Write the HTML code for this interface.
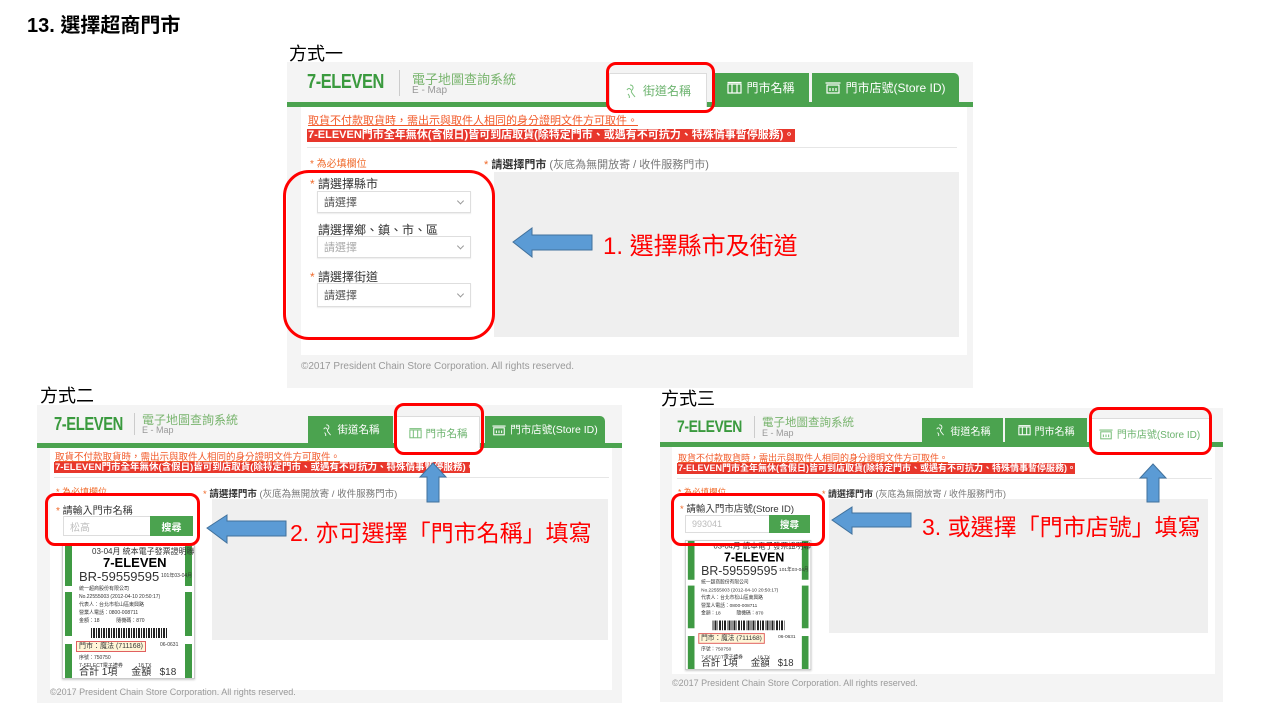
<!DOCTYPE html>
<html><head><meta charset="utf-8">
<style>
*{margin:0;padding:0;box-sizing:border-box}
body{width:1280px;height:720px;background:#fff;position:relative;overflow:hidden;font-family:"Liberation Sans","Noto Sans CJK TC",sans-serif}
.a{position:absolute;white-space:nowrap}
.panel{position:absolute;background:#f4f4f4;overflow:hidden}
.bar{position:absolute;left:0;right:0;height:5px;background:#4ba34f}
.logo{position:absolute;font-weight:bold;color:#3a9a3e;transform:scaleX(.82);transform-origin:left top;letter-spacing:-.5px;line-height:1;white-space:nowrap}
.tab{position:absolute;background:#4ba34f;color:#fff;display:flex;align-items:center;justify-content:center;gap:4px;white-space:nowrap}
.tab.on{background:#fff;color:#6cb36e;border:1px solid #dcdcdc;border-bottom:none}
.content{position:absolute;background:#fff}
.l1{position:absolute;color:#f25a2a;text-decoration:underline;white-space:nowrap}
.l2{position:absolute;background:#e8372c;color:#fff;font-weight:bold;white-space:nowrap;padding:0 1px}
.hr{position:absolute;height:1px;background:#e6e6e6}
.req{position:absolute;color:#f06a2a;white-space:nowrap}
.lab{position:absolute;color:#333;white-space:nowrap}
.lab i{color:#f06a2a;font-style:normal}
.gray{position:absolute;background:#efefef}
.sel{position:absolute;background:#fff;border:1px solid #dedede;box-shadow:0 1px 1px rgba(0,0,0,.08);color:#555;padding-left:6px;display:flex;align-items:center}
.sel::after{content:"";position:absolute;right:7px;top:50%;width:4px;height:4px;border-right:1px solid #999;border-bottom:1px solid #999;transform:translateY(-70%) rotate(45deg)}
.foot{position:absolute;color:#999;white-space:nowrap}
.rbox{position:absolute;border:3px solid #f00;border-radius:10px}
.ann{position:absolute;color:#f00;white-space:nowrap;font-family:"Liberation Sans","Noto Sans CJK TC",sans-serif}
.inp{position:absolute;background:#fff;border:1px solid #ddd;color:#bbb;display:flex;align-items:center;padding-left:6px}
.btn{position:absolute;background:#4ba34f;color:#fff;display:flex;align-items:center;justify-content:center;font-weight:bold}
.rc{position:absolute;background:#fff;border:1px solid #ccc;box-shadow:0 1px 2px rgba(0,0,0,.2);overflow:hidden;transform-origin:left top}
.rc .s{position:absolute;width:7px;background:#3f9a43}
.rc .t{position:absolute;white-space:nowrap;color:#333;line-height:1}
</style></head><body>

<div class="a" style="left:27px;top:9px;font-size:20px;font-weight:bold;color:#000">13. 選擇超商門市</div>

<!-- ===== Panel 1 ===== -->
<div class="a" style="left:289px;top:40px;font-size:18px;color:#000">方式一</div>
<div class="panel" style="left:287px;top:62px;width:686px;height:326px">
  <div class="bar" style="top:40px"></div>
  <div class="logo" style="left:20px;top:10px;font-size:20px">7-ELEVEN</div>
  <div class="a" style="left:112px;top:8px;width:1px;height:26px;background:#ccc"></div>
  <div class="a" style="left:125px;top:7px;font-size:13px;color:#7ab56f">電子地圖查詢系統</div>
  <div class="a" style="left:125px;top:23px;font-size:10px;color:#999">E - Map</div>
  <div class="tab on" style="left:322px;top:11px;width:98px;height:34px;font-size:12px"><svg width="14" height="14" viewBox="0 0 14 14" fill="none" stroke="#7cc07e" stroke-width="1"><path d="M5 1c3 0 4 3 2 5s1 4 3 7M2 6c1-2 3-2 4 0M3 10c1 1 2 3 1 4"/></svg>街道名稱</div>
  <div class="tab" style="left:426px;top:11px;width:96px;height:29px;font-size:12px"><svg width="15" height="13" viewBox="0 0 15 13" fill="none" stroke="#fff" stroke-width="1.2"><rect x="1" y="3" width="13" height="9"/><path d="M0.5 1.5h14M5 3v9M10 3v9"/></svg>門市名稱</div>
  <div class="tab" style="left:525px;top:11px;width:147px;height:29px;font-size:12px;border-top-right-radius:5px"><svg width="16" height="13" viewBox="0 0 16 13" fill="none" stroke="#fff" stroke-width="1.2"><rect x="2" y="4" width="12" height="8"/><path d="M0.5 2h15M5 7v3M8 7v3M11 7v3"/></svg>門市店號(Store ID)</div>
  <div class="content" style="left:14px;top:45px;width:666px;height:248px"></div>
  <div class="l1" style="left:21px;top:53px;font-size:11px;line-height:12px">取貨不付款取貨時，需出示與取件人相同的身分證明文件方可取件。</div>
  <div class="l2" style="left:20px;top:67px;font-size:11px;line-height:13px;width:488px">7-ELEVEN門市全年無休(含假日)皆可到店取貨(除特定門市、或遇有不可抗力、特殊情事暫停服務)。</div>
  <div class="hr" style="left:20px;top:85px;width:650px"></div>
  <div class="req" style="left:23px;top:93px;font-size:10px">* 為必填欄位</div>
  <div class="lab" style="left:197px;top:94px;font-size:11px;color:#777"><i>*</i> <b style="color:#333">請選擇門市</b> (灰底為無開放寄 / 收件服務門市)</div>
  <div class="gray" style="left:207px;top:110px;width:465px;height:165px"></div>
  <div class="lab" style="left:23px;top:113px;font-size:12px"><i>*</i> 請選擇縣市</div>
  <div class="sel" style="left:30px;top:129px;width:154px;height:22px;font-size:11px">請選擇</div>
  <div class="lab" style="left:31px;top:159px;font-size:12px">請選擇鄉、鎮、市、區</div>
  <div class="sel" style="left:30px;top:174px;width:154px;height:22px;font-size:11px;color:#aaa">請選擇</div>
  <div class="lab" style="left:23px;top:206px;font-size:12px"><i>*</i> 請選擇街道</div>
  <div class="sel" style="left:30px;top:221px;width:154px;height:24px;font-size:11px">請選擇</div>
  <div class="foot" style="left:14px;top:299px;font-size:10px">©2017 President Chain Store Corporation. All rights reserved.</div>
</div>
<div class="rbox" style="left:606px;top:62px;width:109px;height:51px"></div>
<div class="rbox" style="left:283px;top:170px;width:212px;height:170px;border-radius:26px"></div>
<svg class="a" style="left:512px;top:227px" width="81" height="31"><polygon points="1,15 20,1 20,8 80,8 80,23 20,23 20,30" fill="#5b9bd5" stroke="#41719c"/></svg>
<div class="ann" style="left:603px;top:226px;font-size:24px">1. 選擇縣市及街道</div>

<!-- ===== Panel 2 ===== -->
<div class="a" style="left:40px;top:382px;font-size:18px;color:#000">方式二</div>
<div class="panel" style="left:37px;top:405px;width:585px;height:298px">
  <div class="bar" style="top:38px"></div>
  <div class="logo" style="left:17px;top:10px;font-size:18px">7-ELEVEN</div>
  <div class="a" style="left:97px;top:8px;width:1px;height:22px;background:#ccc"></div>
  <div class="a" style="left:105px;top:6px;font-size:12px;color:#7ab56f">電子地圖查詢系統</div>
  <div class="a" style="left:105px;top:20px;font-size:9px;color:#999">E - Map</div>
  <div class="tab" style="left:271px;top:11px;width:85px;height:27px;font-size:10.5px"><svg width="12" height="12" viewBox="0 0 14 14" fill="none" stroke="#fff" stroke-width="1"><path d="M5 1c3 0 4 3 2 5s1 4 3 7M2 6c1-2 3-2 4 0M3 10c1 1 2 3 1 4"/></svg>街道名稱</div>
  <div class="tab on" style="left:359px;top:11px;width:84px;height:33px;font-size:10.5px"><svg width="13" height="12" viewBox="0 0 15 13" fill="none" stroke="#7cc07e" stroke-width="1.2"><rect x="1" y="3" width="13" height="9"/><path d="M0.5 1.5h14M5 3v9M10 3v9"/></svg>門市名稱</div>
  <div class="tab" style="left:448px;top:11px;width:120px;height:27px;font-size:10.5px;border-top-right-radius:5px"><svg width="14" height="12" viewBox="0 0 16 13" fill="none" stroke="#fff" stroke-width="1.2"><rect x="2" y="4" width="12" height="8"/><path d="M0.5 2h15M5 7v3M8 7v3M11 7v3"/></svg>門市店號(Store ID)</div>
  <div class="content" style="left:13px;top:43px;width:562px;height:242px"></div>
  <div class="l1" style="left:18px;top:48px;font-size:9.5px;line-height:10px">取貨不付款取貨時，需出示與取件人相同的身分證明文件方可取件。</div>
  <div class="l2" style="left:17px;top:57px;font-size:9.5px;line-height:11px;width:416px">7-ELEVEN門市全年無休(含假日)皆可到店取貨(除特定門市、或遇有不可抗力、特殊情事暫停服務)。</div>
  <div class="hr" style="left:17px;top:72px;width:555px"></div>
  <div class="req" style="left:19px;top:80px;font-size:9px">* 為必填欄位</div>
  <div class="lab" style="left:166px;top:81px;font-size:9.5px;color:#777"><i>*</i> <b style="color:#333">請選擇門市</b> (灰底為無開放寄 / 收件服務門市)</div>
  <div class="gray" style="left:175px;top:94px;width:396px;height:141px"></div>
  <div class="lab" style="left:19px;top:97px;font-size:10px"><i>*</i> 請輸入門市名稱</div>
  <div class="inp" style="left:26px;top:111px;width:88px;height:20px;font-size:10px">松高</div>
  <div class="btn" style="left:113px;top:111px;width:43px;height:20px;font-size:10px">搜尋</div>
  <div class="rc" style="left:25px;top:140px;width:133px;height:134px">
    <div class="s" style="left:2px;top:0;height:40px"></div><div class="s" style="left:2px;top:46px;height:44px"></div><div class="s" style="left:2px;top:98px;height:36px"></div>
    <div class="s" style="right:2px;top:0;height:40px"></div><div class="s" style="right:2px;top:46px;height:44px"></div><div class="s" style="right:2px;top:98px;height:36px"></div>
    <div class="t" style="left:29px;top:2px;font-size:8px">03-04月 統本電子發票證明聯</div>
    <div class="t" style="left:40px;top:10px;font-size:13px;font-weight:bold;color:#000">7-ELEVEN</div>
    <div class="t" style="left:16px;top:24px;font-size:13px">BR-59559595</div>
    <div class="t" style="left:98px;top:28px;font-size:5px">101年03-04月</div>
    <div class="t" style="left:16px;top:39px;font-size:5px;line-height:8px">統一超商股份有限公司<br>No.22555003 (2012-04-10 20:50:17)<br>代表人：台北市松山區東興路<br>營業人電話：0800-008711<br>金額：18 &nbsp;&nbsp;&nbsp;&nbsp;&nbsp;&nbsp;&nbsp;&nbsp;&nbsp;&nbsp; 隨機碼：870</div>
    <div class="a" style="left:28px;top:82px;width:76px;height:10px;background:repeating-linear-gradient(90deg,#222 0 1px,#fff 1px 2px,#222 2px 4px,#fff 4px 5px)"></div>
    <div class="t" style="left:13px;top:95px;font-size:7px;border:1px solid #e06060;background:#fff6d8;padding:1px 2px">門市：魔法 (711168)</div>
    <div class="t" style="left:97px;top:97px;font-size:5px">06-0631</div>
    <div class="t" style="left:16px;top:108px;font-size:5px;line-height:8px">序號：750750<br>7-SELECT電子禮券 &nbsp;&nbsp;&nbsp;&nbsp;&nbsp;&nbsp;&nbsp;&nbsp;&nbsp; 18 TX</div>
    <div class="t" style="left:16px;top:122px;font-size:10px">合計 1項 &nbsp;&nbsp;&nbsp; 金額 &nbsp; $18</div>
  </div>
  <div class="foot" style="left:13px;top:282px;font-size:9px">©2017 President Chain Store Corporation. All rights reserved.</div>
</div>
<div class="rbox" style="left:394px;top:403px;width:90px;height:52px"></div>
<div class="rbox" style="left:45px;top:493px;width:155px;height:53px"></div>
<svg class="a" style="left:206px;top:514px" width="81" height="30"><polygon points="1,14 21,1 21,7 80,7 80,22 21,22 21,29" fill="#5b9bd5" stroke="#41719c"/></svg>
<svg class="a" style="left:419px;top:462px" width="28" height="41"><polygon points="14,1 27,15 20,15 20,40 8,40 8,15 1,15" fill="#5b9bd5" stroke="#41719c"/></svg>
<div class="ann" style="left:290px;top:514px;font-size:23px">2. 亦可選擇「門市名稱」填寫</div>

<!-- ===== Panel 3 ===== -->
<div class="a" style="left:661px;top:385px;font-size:18px;color:#000">方式三</div>
<div class="panel" style="left:660px;top:408px;width:563px;height:294px">
  <div class="bar" style="top:34px"></div>
  <div class="logo" style="left:17px;top:10px;font-size:17px">7-ELEVEN</div>
  <div class="a" style="left:94px;top:8px;width:1px;height:22px;background:#ccc"></div>
  <div class="a" style="left:102px;top:6px;font-size:11.5px;color:#7ab56f">電子地圖查詢系統</div>
  <div class="a" style="left:102px;top:20px;font-size:9px;color:#999">E - Map</div>
  <div class="tab" style="left:262px;top:10px;width:81px;height:24px;font-size:10px"><svg width="12" height="12" viewBox="0 0 14 14" fill="none" stroke="#fff" stroke-width="1"><path d="M5 1c3 0 4 3 2 5s1 4 3 7M2 6c1-2 3-2 4 0M3 10c1 1 2 3 1 4"/></svg>街道名稱</div>
  <div class="tab" style="left:345px;top:10px;width:82px;height:24px;font-size:10px"><svg width="13" height="12" viewBox="0 0 15 13" fill="none" stroke="#fff" stroke-width="1.2"><rect x="1" y="3" width="13" height="9"/><path d="M0.5 1.5h14M5 3v9M10 3v9"/></svg>門市名稱</div>
  <div class="tab on" style="left:429px;top:10px;width:121px;height:30px;font-size:10px"><svg width="14" height="12" viewBox="0 0 16 13" fill="none" stroke="#7cc07e" stroke-width="1.2"><rect x="2" y="4" width="12" height="8"/><path d="M0.5 2h15M5 7v3M8 7v3M11 7v3"/></svg>門市店號(Store ID)</div>
  <div class="content" style="left:12px;top:39px;width:543px;height:227px"></div>
  <div class="l1" style="left:18px;top:45px;font-size:9px;line-height:10px">取貨不付款取貨時，需出示與取件人相同的身分證明文件方可取件。</div>
  <div class="l2" style="left:17px;top:55px;font-size:9px;line-height:11px;width:398px">7-ELEVEN門市全年無休(含假日)皆可到店取貨(除特定門市、或遇有不可抗力、特殊情事暫停服務)。</div>
  <div class="hr" style="left:17px;top:70px;width:535px"></div>
  <div class="req" style="left:18px;top:78px;font-size:8.5px">* 為必填欄位</div>
  <div class="lab" style="left:162px;top:79px;font-size:9px;color:#777"><i>*</i> <b style="color:#333">請選擇門市</b> (灰底為無開放寄 / 收件服務門市)</div>
  <div class="gray" style="left:169px;top:91px;width:379px;height:134px"></div>
  <div class="lab" style="left:20px;top:93px;font-size:9.5px"><i>*</i> 請輸入門市店號(Store ID)</div>
  <div class="inp" style="left:25px;top:107px;width:85px;height:18px;font-size:9px">993041</div>
  <div class="btn" style="left:109px;top:107px;width:41px;height:18px;font-size:9.5px">搜尋</div>
  <div class="rc" style="left:25px;top:132px;width:133px;height:134px;transform:scale(.95,.97)">
    <div class="s" style="left:2px;top:0;height:40px"></div><div class="s" style="left:2px;top:46px;height:44px"></div><div class="s" style="left:2px;top:98px;height:36px"></div>
    <div class="s" style="right:2px;top:0;height:40px"></div><div class="s" style="right:2px;top:46px;height:44px"></div><div class="s" style="right:2px;top:98px;height:36px"></div>
    <div class="t" style="left:29px;top:2px;font-size:8px">03-04月 統本電子發票證明聯</div>
    <div class="t" style="left:40px;top:10px;font-size:13px;font-weight:bold;color:#000">7-ELEVEN</div>
    <div class="t" style="left:16px;top:24px;font-size:13px">BR-59559595</div>
    <div class="t" style="left:98px;top:28px;font-size:5px">101年03-04月</div>
    <div class="t" style="left:16px;top:39px;font-size:5px;line-height:8px">統一超商股份有限公司<br>No.22555003 (2012-04-10 20:50:17)<br>代表人：台北市松山區東興路<br>營業人電話：0800-008711<br>金額：18 &nbsp;&nbsp;&nbsp;&nbsp;&nbsp;&nbsp;&nbsp;&nbsp;&nbsp;&nbsp; 隨機碼：870</div>
    <div class="a" style="left:28px;top:82px;width:76px;height:10px;background:repeating-linear-gradient(90deg,#222 0 1px,#fff 1px 2px,#222 2px 4px,#fff 4px 5px)"></div>
    <div class="t" style="left:13px;top:95px;font-size:7px;border:1px solid #e06060;background:#fff6d8;padding:1px 2px">門市：魔法 (711168)</div>
    <div class="t" style="left:97px;top:97px;font-size:5px">06-0631</div>
    <div class="t" style="left:16px;top:108px;font-size:5px;line-height:8px">序號：750750<br>7-SELECT電子禮券 &nbsp;&nbsp;&nbsp;&nbsp;&nbsp;&nbsp;&nbsp;&nbsp;&nbsp; 18 TX</div>
    <div class="t" style="left:16px;top:122px;font-size:10px">合計 1項 &nbsp;&nbsp;&nbsp; 金額 &nbsp; $18</div>
  </div>
  <div class="foot" style="left:12px;top:270px;font-size:9px">©2017 President Chain Store Corporation. All rights reserved.</div>
</div>
<div class="rbox" style="left:1089px;top:407px;width:123px;height:48px"></div>
<div class="rbox" style="left:671px;top:493px;width:154px;height:53px"></div>
<svg class="a" style="left:831px;top:506px" width="81" height="29"><polygon points="1,14 21,1 21,7 80,7 80,21 21,21 21,28" fill="#5b9bd5" stroke="#41719c"/></svg>
<svg class="a" style="left:1139px;top:463px" width="28" height="40"><polygon points="14,1 27,15 20,15 20,39 8,39 8,15 1,15" fill="#5b9bd5" stroke="#41719c"/></svg>
<div class="ann" style="left:922px;top:508px;font-size:23px">3. 或選擇「門市店號」填寫</div>

</body></html>
